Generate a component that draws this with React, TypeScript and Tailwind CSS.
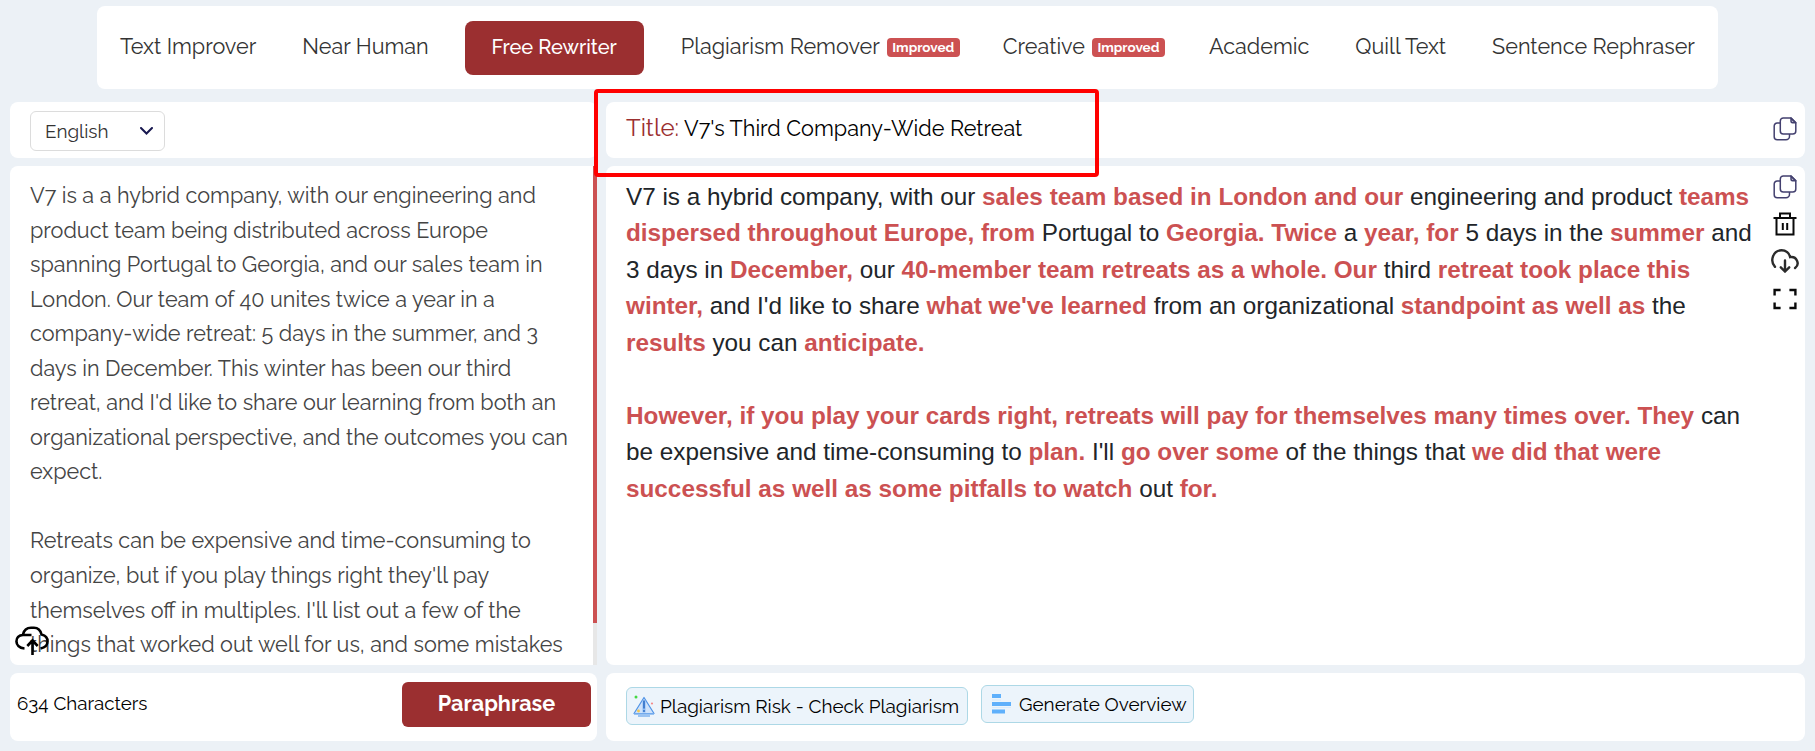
import React from "react";

interface Mode {
  label: string;
  className: string;
  active?: boolean;
  improved?: boolean;
}

interface Segment {
  text: string;
  changed?: boolean;
}

const modes: Mode[] = [
  { label: "Text Improver", className: "ml-[23px]" },
  { label: "Near Human", className: "ml-[46px]" },
  { label: "Free Rewriter", className: "ml-[36px]", active: true },
  { label: "Plagiarism Remover", className: "ml-[37px]", improved: true },
  { label: "Creative", className: "ml-[43px]", improved: true },
  { label: "Academic", className: "ml-[44px]" },
  { label: "Quill Text", className: "ml-[46px]" },
  { label: "Sentence Rephraser", className: "ml-[46px]" }
];

const sourceLines = [
  "V7 is a a hybrid company, with our engineering and",
  "product team being distributed across Europe",
  "spanning Portugal to Georgia, and our sales team in",
  "London. Our team of 40 unites twice a year in a",
  "company-wide retreat: 5 days in the summer, and 3",
  "days in December. This winter has been our third",
  "retreat, and I'd like to share our learning from both an",
  "organizational perspective, and the outcomes you can",
  "expect.",
  "",
  "Retreats can be expensive and time-consuming to",
  "organize, but if you play things right they'll pay",
  "themselves off in multiples. I'll list out a few of the",
  "things that worked out well for us, and some mistakes"
];

const resultLines: Segment[][] = [
  [
    { text: "V7 is a hybrid company, with our " },
    { text: "sales team based in London and our", changed: true },
    { text: " engineering and product " },
    { text: "teams", changed: true }
  ],
  [
    { text: "dispersed throughout Europe, from", changed: true },
    { text: " Portugal to " },
    { text: "Georgia. Twice", changed: true },
    { text: " a " },
    { text: "year, for", changed: true },
    { text: " 5 days in the " },
    { text: "summer", changed: true },
    { text: " and" }
  ],
  [
    { text: "3 days in " },
    { text: "December,", changed: true },
    { text: " our " },
    { text: "40-member team retreats as a whole. Our", changed: true },
    { text: " third " },
    { text: "retreat took place this", changed: true }
  ],
  [
    { text: "winter,", changed: true },
    { text: " and I'd like to share " },
    { text: "what we've learned", changed: true },
    { text: " from an organizational " },
    { text: "standpoint as well as", changed: true },
    { text: " the" }
  ],
  [{ text: "results", changed: true }, { text: " you can " }, { text: "anticipate.", changed: true }],
  [],
  [
    { text: "However, if you play your cards right, retreats will pay for themselves many times over. They", changed: true },
    { text: " can" }
  ],
  [
    { text: "be expensive and time-consuming to " },
    { text: "plan.", changed: true },
    { text: " I'll " },
    { text: "go over some", changed: true },
    { text: " of the things that " },
    { text: "we did that were", changed: true }
  ],
  [
    { text: "successful as well as some pitfalls to watch", changed: true },
    { text: " out " },
    { text: "for.", changed: true }
  ]
];

function CopyIcon() {
  return (
    <svg width="24" height="24" viewBox="0 0 24 24" fill="none" stroke="#43406f" strokeWidth="1.5" strokeLinejoin="round">
      <path d="M10.300 1H18L22.800 5.800V14a3 3 0 0 1-3 3h-9.500a3 3 0 0 1-3-3V4a3 3 0 0 1 3-3Z" />
      <path d="M18 1V4.300a1.500 1.500 0 0 0 1.500 1.500h3.300Z" fill="#43406f" fillOpacity="0.35" />
      <path d="M7.300 6H4.200a3 3 0 0 0-3 3v10.800a3 3 0 0 0 3 3h8.800a3.500 3.500 0 0 0 3.500-3.500V17" />
    </svg>
  );
}

function TrashIcon() {
  return (
    <svg width="24" height="24" viewBox="0 0 24 24" fill="none" stroke="#0a0a0a" strokeWidth="2">
      <path d="M0.500 6h23M7 6V1.500h10V6M3.500 6v16.500h17V6M9.800 11v7M14.200 11v7" />
    </svg>
  );
}

function CloudDownloadIcon() {
  return (
    <svg width="28" height="24" viewBox="0 0 28 24" fill="none" stroke="#2b2b2b" strokeWidth="2.400" strokeLinecap="round">
      <path d="M4 17.800C-1.500 12 2 1.300 10.500 1.300c4.500 0 7.800 3 8.600 6.800 6.600-1.200 10.200 7 5 10.900" />
      <path d="M14 11.500V22M9.800 18.300 14 22.500l4.200-4.200" />
    </svg>
  );
}

function FullscreenIcon() {
  return (
    <svg width="24" height="22" viewBox="0 0 24 22" fill="none" stroke="#0a0a0a" strokeWidth="2.400">
      <path d="M1.600 7.500V2h6M16.400 2h6v5.500M22.400 14.500v5.500h-6M7.600 20h-6v-5.500" />
    </svg>
  );
}

function CloudUploadIcon() {
  return (
    <svg width="34" height="29" viewBox="0 0 34 29" fill="none" stroke="#000" strokeWidth="2.600">
      <path d="M9.500 22.500C-1.500 21.500-0.500 9 8 9h8.500M8 8.500C9 4 11.500 1.800 16 1.800h3c4 0 6.500 2.500 7.500 6.700C34.500 10.500 35 20.500 25.500 22.500" />
      <path d="M17.500 29V14.500M12.300 20l5.200-5.500 5.200 5.500" />
    </svg>
  );
}

function RiskIcon() {
  return (
    <svg width="22" height="22" viewBox="0 0 22 22" fill="none">
      <path d="M11 2.500 21 18.500H1Z" fill="#cfe3fb" stroke="#4f93e6" strokeWidth="1.200" strokeLinejoin="round" />
      <path d="M9.500 5.500h3v12h-3Z" fill="#8fbdf3" />
      <path d="M11 5.500v8" stroke="#2f6fc6" strokeWidth="1.600" />
      <circle cx="11" cy="16" r="1" fill="#2f6fc6" />
      <path d="M1 19h20M5 21h12" stroke="#7fb2f0" strokeWidth="1.400" />
      <circle cx="3" cy="2" r="1.500" fill="#43d843" />
      <circle cx="19" cy="8.500" r="1.100" fill="#f58a8a" />
      <circle cx="5.500" cy="16" r="1.400" fill="#f3c64b" />
    </svg>
  );
}

function OverviewIcon() {
  return (
    <svg width="20" height="20" viewBox="0 0 20 20">
      <path d="M0 0h9v4H0ZM0 8h19v4H0ZM0 15.500h13v4H0Z" fill="#5fb0fb" />
      <path d="M0 5.500h9v1H0ZM0 13.200h19v.8H0Z" fill="#d3e9fd" />
    </svg>
  );
}

function ModeTab({ mode }: { mode: Mode }) {
  if (mode.active) {
    return (
      <button className={`${mode.className} flex h-[54px] w-[179px] items-center justify-center rounded-lg bg-[#9b2f30] pb-px text-[20px] font-medium text-white`}>
        {mode.label}
      </button>
    );
  }
  return (
    <button className={`${mode.className} flex items-center text-[21.6px]`}>
      {mode.label}
      {mode.improved && (
        <span className="ml-[7px] flex h-[19px] w-[73px] items-center justify-center rounded bg-[#cc5152] text-[13.5px] font-bold text-white">
          Improved
        </span>
      )}
    </button>
  );
}

export default function App() {
  return (
    <div className="relative flex h-[751px] w-[1815px] flex-col overflow-hidden bg-[#ecf1f6] pt-1.5 font-['Raleway','Lato',sans-serif] text-[#212529]">
      <nav className="ml-[97px] flex h-[83px] w-[1621px] items-center whitespace-nowrap rounded-lg bg-white text-[#333]">
        {modes.map((mode) => (
          <ModeTab key={mode.label} mode={mode} />
        ))}
      </nav>

      <main className="mt-[13px] flex gap-[9px] pl-2.5">
        <section className="flex w-[587px] flex-col gap-2">
          <div className="flex h-14 items-center rounded-lg bg-white pl-5 pt-0.5">
            <button className="flex h-10 w-[135px] items-center justify-between rounded-md border border-[#dcdcdc] pl-3.5 pr-[11px] text-[18.9px] text-[#333]">
              English
              <svg width="13" height="8" viewBox="0 0 13 8" fill="none" stroke="#17174f" strokeWidth="2" strokeLinecap="round">
                <path d="m1 1 5.500 5.500L12 1" />
              </svg>
            </button>
          </div>
          <div className="relative flex h-[499px] justify-between overflow-hidden rounded-l-lg bg-white">
            <div className="whitespace-nowrap pl-5 pt-[13px] text-[21.6px] leading-[34.56px] text-[#444]">
              {sourceLines.map((line, index) => (
                <div key={index} className="h-[34.56px]">
                  {line}
                </div>
              ))}
            </div>
            <div className="h-full w-1 shrink-0 bg-[#e7e7e7]">
              <div className="h-[457px] bg-[#cc5152]" />
            </div>
            <button className="absolute bottom-2.5 left-[5px]">
              <CloudUploadIcon />
            </button>
          </div>
          <div className="flex h-[68px] items-start justify-between rounded-lg bg-white pl-[7px] pr-1.5 pt-[9px]">
            <span className="pt-[7px] text-[18.8px] text-black">634 Characters</span>
            <button className="h-[45px] w-[189px] rounded-md bg-[#9b2f30] text-[21.6px] font-bold text-white">Paraphrase</button>
          </div>
        </section>

        <section className="flex w-[1199px] flex-col gap-2">
          <div className="flex h-14 items-center justify-between rounded-lg bg-white pl-5 pr-2">
            <div className="flex items-baseline whitespace-nowrap pb-1 text-black">
              <span className="text-[24px] text-[#9b2f30]">Title:</span>
              <span className="ml-[5px] text-[21.6px]">V7's Third Company-Wide Retreat</span>
            </div>
            <button className="pb-0.5">
              <CopyIcon />
            </button>
          </div>
          <div className="flex h-[499px] justify-between rounded-lg bg-white pl-5 pr-1.5">
            <div className="whitespace-pre pt-[13px] font-['Liberation_Sans',Arial,sans-serif] text-[24.3px] leading-[36.45px]">
              {resultLines.map((line, index) => (
                <div key={index} className="h-[36.45px]">
                  {line.map((segment) => (
                    <span key={segment.text} className={segment.changed ? "font-bold text-[#cc5152]" : ""}>
                      {segment.text}
                    </span>
                  ))}
                </div>
              ))}
            </div>
            <div className="flex flex-col items-center gap-[13px] pt-[9px]">
              <button>
                <CopyIcon />
              </button>
              <button>
                <TrashIcon />
              </button>
              <button>
                <CloudDownloadIcon />
              </button>
              <button className="pt-0.5">
                <FullscreenIcon />
              </button>
            </div>
          </div>
          <div className="flex h-[68px] items-start gap-[13px] whitespace-nowrap rounded-lg bg-white pl-5 pt-3 text-[18.9px] text-black">
            <button className="mt-0.5 flex h-[38px] w-[342px] items-center gap-[5px] rounded-md border border-[#add8e6] bg-[#ecf4fb] pl-1.5">
              <RiskIcon />
              Plagiarism Risk - Check Plagiarism
            </button>
            <button className="flex h-[38px] w-[213px] items-center gap-[7px] rounded-md border border-[#add8e6] bg-[#ecf4fb] pl-2.5">
              <OverviewIcon />
              Generate Overview
            </button>
          </div>
        </section>
      </main>

      <div className="pointer-events-none absolute left-[594px] top-[89px] h-[88px] w-[505px] rounded-sm border-4 border-[#ff0000]" />
    </div>
  );
}
